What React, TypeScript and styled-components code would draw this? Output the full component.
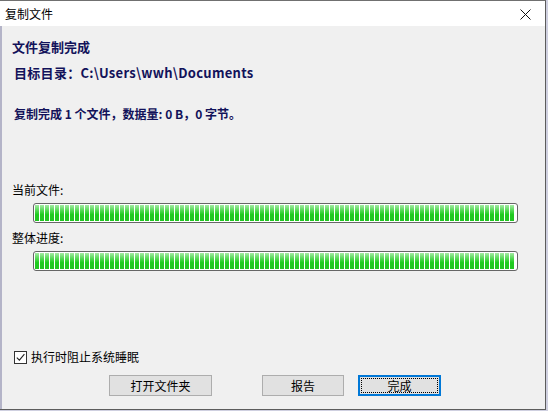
import React from "react";
import styled, { createGlobalStyle } from "styled-components";

const Global = createGlobalStyle`
  html, body { margin: 0; padding: 0; }
  body {
    width: 548px; height: 411px; overflow: hidden;
    background: #e4e4ea;
    font-family: "Noto Sans CJK SC", "Noto Sans", sans-serif;
  }
`;

const Screen = styled.div`
  width: 548px;
  height: 411px;
  display: flex;
  flex-direction: column;
  background: #cfd0e0;
`;

const Window = styled.div`
  width: 545px;
  height: 408px;
  display: flex;
  flex-direction: column;
  border-top: 1px solid #707070;
  border-right: 1px solid #5c5c5c;
  border-bottom: 1px solid #5c5c5c;
  background: #f0f0f0;
`;

const TitleBar = styled.div`
  height: 25px;
  flex: none;
  background: #ffffff;
  display: flex;
  align-items: center;
  justify-content: space-between;
  padding: 0 14px 0 5px;
  font-size: 12px;
  color: #000;
`;

const Close = styled.svg`
  width: 11px;
  height: 11px;
  margin-top: 1px;
`;

const Body = styled.div`
  flex: 1;
  display: flex;
  flex-direction: column;
  border-left: 2px solid #b4b4c8;
  padding: 0 0 0 10px;
`;

const Heading = styled.div<{ $top: number; $size: number; $indent?: number; $ls?: number }>`
  margin-top: ${(p) => p.$top}px;
  font-size: ${(p) => p.$size}px;
  font-weight: bold;
  line-height: 17px;
  color: #12125a;
  padding-left: ${(p) => p.$indent ?? 0}px;
  letter-spacing: ${(p) => p.$ls ?? 0}px;
`;

const Label = styled.div<{ $top: number }>`
  margin-top: ${(p) => p.$top}px;
  font-size: 12px;
  line-height: 16px;
  color: #000;
`;

const Bar = styled.div`
  margin: 5px 0 0 21px;
  width: 481px;
  height: 16px;
  padding: 1px;
  border: 1px solid #666;
  border-radius: 3px;
  background: #fff;
`;

const Fill = styled.div`
  height: 100%;
  width: calc(100% - 2px);
  background:
    repeating-linear-gradient(90deg, transparent 0 4px, #ffffff 4px 5px),
    linear-gradient(180deg, #a4eaa4 0%, #52d852 35%, #1ecb1e 60%, #22c522 100%);
`;

const CheckRow = styled.label`
  margin-top: 78px;
  margin-left: 2px;
  display: flex;
  align-items: center;
  gap: 4px;
  font-size: 12px;
  line-height: 16px;
  color: #000;
`;

const Box = styled.span`
  width: 11px;
  height: 11px;
  border: 1px solid #333;
  background: #fff;
  display: flex;
  align-items: center;
  justify-content: center;
`;

const Buttons = styled.div`
  margin-top: 10px;
  display: flex;
  padding-left: 97px;
`;

const Btn = styled.div<{ $w: number; $gap: number; $primary?: boolean }>`
  box-sizing: border-box;
  width: ${(p) => p.$w}px;
  height: 21px;
  margin-left: ${(p) => p.$gap}px;
  background: #e1e1e1;
  border: ${(p) => (p.$primary ? "2px solid #0078d7" : "1px solid #adadad")};
  display: flex;
  align-items: center;
  justify-content: center;
  font-size: 12px;
  color: #000;
  position: relative;
`;

const Focus = styled.span`
  position: absolute;
  inset: 1px;
  border: 1px dotted #000;
`;

export default function App() {
  return (
    <>
      <Global />
      <Screen>
        <Window>
          <TitleBar>
            <span>复制文件</span>
            <Close viewBox="0 0 11 11">
              <path d="M0.5 0.5 L10.5 10.5 M10.5 0.5 L0.5 10.5" stroke="#111" strokeWidth="1" />
            </Close>
          </TitleBar>
          <Body>
            <Heading $top={12} $size={13}>文件复制完成</Heading>
            <Heading $top={9} $size={13} $indent={2} $ls={0.3}>目标目录：C:\Users\wwh\Documents</Heading>
            <Heading $top={24} $size={12} $indent={2}>复制完成 1 个文件，数据量: 0 B，0 字节。</Heading>
            <Label $top={60}>当前文件:</Label>
            <Bar>
              <Fill />
            </Bar>
            <Label $top={7}>整体进度:</Label>
            <Bar>
              <Fill />
            </Bar>
            <CheckRow>
              <Box>
                <svg width="9" height="9" viewBox="0 0 9 9">
                  <path d="M0.8 4.6 L3.4 7.2 L8.4 1.2" fill="none" stroke="#222" strokeWidth="1.1" />
                </svg>
              </Box>
              执行时阻止系统睡眠
            </CheckRow>
            <Buttons>
              <Btn $w={103} $gap={0}>打开文件夹</Btn>
              <Btn $w={82} $gap={50}>报告</Btn>
              <Btn $w={83} $gap={14} $primary>
                <Focus />
                完成
              </Btn>
            </Buttons>
          </Body>
        </Window>
      </Screen>
    </>
  );
}
